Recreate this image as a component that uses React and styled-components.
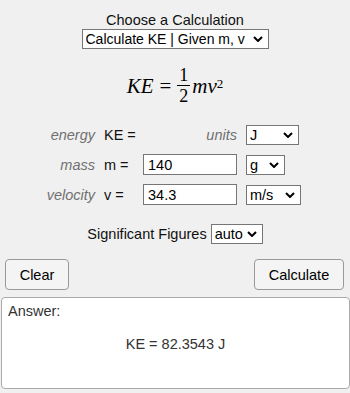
import React from 'react';
import styled, { createGlobalStyle } from 'styled-components';

const chevron = "url(\"data:image/svg+xml,%3Csvg xmlns='http://www.w3.org/2000/svg' width='10' height='6' viewBox='0 0 10 6'%3E%3Cpath d='M1 1l4 4 4-4' fill='none' stroke='%23000' stroke-width='2'/%3E%3C/svg%3E\")";

const Global = createGlobalStyle`
  html, body {
    margin: 0;
    padding: 0;
    background: #f0f0f0;
  }
  body {
    font-family: "Liberation Sans", Arial, sans-serif;
    font-size: 14.5px;
    color: #111;
  }
`

const Page = styled.div`
  width: 350px;
  display: flex;
  flex-direction: column;
  align-items: center;
`

const Title = styled.div`
  margin-top: 12px;
  line-height: 17px;
`

const Select = styled.select`
  appearance: none;
  -webkit-appearance: none;
  font-family: "Liberation Sans", Arial, sans-serif;
  font-size: ${p => p.fs || 14.5}px;
  height: 20px;
  box-sizing: border-box;
  width: ${p => p.w || 'auto'};
  padding: 0 16px 0 3px;
  border: 1px solid #767676;
  border-radius: 0;
  background: #fff ${chevron} no-repeat right 5px center;
  color: #000;
  outline: none;
`

const Formula = styled.div`
  display: flex;
  align-items: center;
  margin: 19px 0 21px;
  font-family: "Liberation Serif", "Times New Roman", serif;
  font-size: 21px;
  color: #000;
`

const Var = styled.span`
  font-style: italic;
`

const Eq = styled.span`
  margin: 0 6px;
`

const Frac = styled.span`
  display: inline-flex;
  flex-direction: column;
  align-items: center;
  font-size: 18px;
  line-height: 15px;
  margin-right: 2px;
  & > span:first-child {
    border-bottom: 1px solid #000;
    padding: 0 2px 2px;
  }
  & > span:last-child {
    padding-top: 3px;
  }
`

const Sup = styled.sup`
  font-size: 13px;
  position: relative;
  top: -2px;
`

const Fields = styled.div`
  align-self: flex-start;
  display: grid;
  grid-template-columns: 95px 48px 94px auto;
  column-gap: 0;
  row-gap: 9px;
  align-items: center;
`

const Name = styled.span`
  font-style: italic;
  color: #707070;
  text-align: right;
`

const Sym = styled.span`
  padding-left: 9px;
`

const Input = styled.input`
  font-family: "Liberation Sans", Arial, sans-serif;
  font-size: 14.5px;
  height: 21px;
  box-sizing: border-box;
  width: 94px;
  border: 1px solid #767676;
  padding: 0 4px;
  outline: none;
`

const Cell = styled.div`
  padding-left: 9px;
`

const Sig = styled.div`
  margin-top: 19px;
  display: flex;
  align-items: center;
  gap: 4px;
`

const Buttons = styled.div`
  width: 100%;
  box-sizing: border-box;
  display: flex;
  justify-content: space-between;
  padding: 0 6px 0 5px;
  margin-top: 15px;
`

const Button = styled.button`
  font-family: "Liberation Sans", Arial, sans-serif;
  font-size: 14.5px;
  height: 31px;
  width: ${p => p.w}px;
  background: #f4f4f4;
  border: 1px solid #999;
  border-radius: 4px;
  color: #000;
`

const Answer = styled.div`
  box-sizing: border-box;
  width: 349px;
  height: 92px;
  margin-top: 7px;
  align-self: flex-start;
  margin-left: 1px;
  background: #fff;
  border: 1px solid #aaa;
  border-radius: 4px;
  padding: 5px 6px;
  color: #333;
`

const Result = styled.div`
  text-align: center;
  margin-top: 17px;
`

export default function App() {
  return (
    <Page>
      <Global />
      <Title>Choose a Calculation</Title>
      <Select w="187px" fs={14} defaultValue="ke">
        <option value="ke">Calculate KE | Given m, v</option>
      </Select>
      <Formula>
        <Var>KE</Var>
        <Eq>=</Eq>
        <Frac><span>1</span><span>2</span></Frac>
        <Var>mv</Var>
        <Sup>2</Sup>
      </Formula>
      <Fields>
        <Name>energy</Name>
        <Sym>KE =</Sym>
        <Name>units</Name>
        <Cell><Select w="53px"><option>J</option></Select></Cell>

        <Name>mass</Name>
        <Sym>m =</Sym>
        <Input defaultValue="140" />
        <Cell><Select w="39px"><option>g</option></Select></Cell>

        <Name>velocity</Name>
        <Sym>v =</Sym>
        <Input defaultValue="34.3" />
        <Cell><Select w="55px"><option>m/s</option></Select></Cell>
      </Fields>
      <Sig>
        Significant Figures
        <Select w="52px"><option>auto</option></Select>
      </Sig>
      <Buttons>
        <Button w={64}>Clear</Button>
        <Button w={90}>Calculate</Button>
      </Buttons>
      <Answer>
        Answer:
        <Result>KE = 82.3543 J</Result>
      </Answer>
    </Page>
  );
}
